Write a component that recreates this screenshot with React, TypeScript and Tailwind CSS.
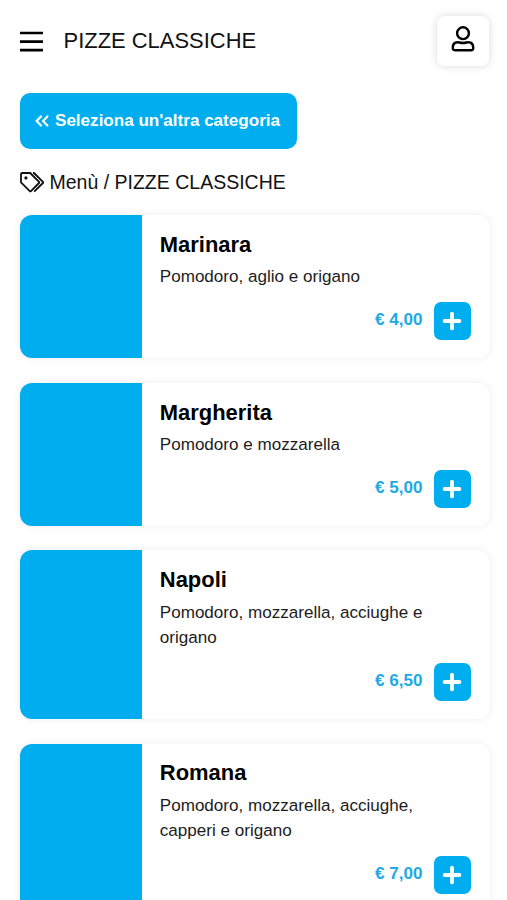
const dishes = [
  { name: 'Marinara', desc: 'Pomodoro, aglio e origano', price: '€ 4,00' },
  { name: 'Margherita', desc: 'Pomodoro e mozzarella', price: '€ 5,00' },
  { name: 'Napoli', desc: 'Pomodoro, mozzarella, acciughe e origano', price: '€ 6,50' },
  { name: 'Romana', desc: 'Pomodoro, mozzarella, acciughe, capperi e origano', price: '€ 7,00' }
]

function UserIcon() {
  return (
    <svg className="mr-px mb-[3px] w-6 h-7" viewBox="0 0 24 28" fill="none" stroke="currentColor" strokeWidth="2.4">
      <circle cx="12" cy="8.2" r="5.9" />
      <path d="M6.4 17.2C8.2 17 9 18 12 18C15 18 15.8 17 17.6 17.2C20.6 17.4 22.2 19.8 22.2 22.6V23.3Q22.2 25.2 20.3 25.2H3.7Q1.8 25.2 1.8 23.3V22.6C1.8 19.8 3.4 17.4 6.4 17.2Z" strokeLinejoin="round" />
    </svg>
  )
}

function TagsIcon() {
  return (
    <svg className="mb-[2px] w-[25px] h-[21px]" viewBox="0 0 25 21" fill="none" stroke="currentColor" strokeWidth="1.8" strokeLinejoin="round">
      <path d="M1 2.2Q1 1 2.2 1H10.2L19 9.8Q19.6 10.4 19 11L11 19.1Q10.4 19.7 9.8 19.1L1 10.4Z" />
      <path d="M13 1H14L22.9 9.8Q23.5 10.4 22.9 11L14.2 19.7" />
      <circle cx="5.9" cy="5.9" r="1.6" fill="currentColor" stroke="none" />
    </svg>
  )
}

export default function App() {
  return (
    <main className="h-[900px] overflow-hidden bg-white px-[19.5px] font-['Liberation_Sans',sans-serif] text-black">
      {/* Header */}
      <header className="-mr-[1.5px] flex h-[68px] items-center pt-[15px]">
        <svg className="w-6 h-[22px]" viewBox="0 0 24 22" stroke="currentColor" strokeWidth="2.7">
          <path d="M0 2H23M0 10.6H23M0 19.2H23" />
        </svg>
        <h1 className="ml-5 flex-1 text-[21.95px] text-[#111]">PIZZE CLASSICHE</h1>
        <button className="mb-[2px] flex h-[50px] w-[52px] items-center justify-center rounded-lg bg-white shadow-[0_0_8px_rgba(0,0,0,0.15)]">
          <UserIcon />
        </button>
      </header>

      <button className="mt-[25px] flex h-14 w-[277px] items-center rounded-[10px] bg-[#00adef] pl-[15.5px] text-[17.07px] font-bold text-white">
        <svg className="mr-[6px] mb-px w-[14px] h-3" viewBox="0 0 14 12" fill="none" stroke="currentColor" strokeWidth="2.1" strokeLinecap="round" strokeLinejoin="round">
          <path d="M6 1.4L1.6 6L6 10.6M12.4 1.4L8 6L12.4 10.6" />
        </svg>
        Seleziona un'altra categoria
      </button>

      <h2 className="mt-[21px] flex h-[26px] items-center gap-[5px] text-[19.5px] text-[#111]">
        <TagsIcon />
        Menù / PIZZE CLASSICHE
      </h2>

      {/* Dishes */}
      <div className="mt-[19.3px] flex flex-col gap-[24.4px]">
        {dishes.map((dish) => (
          <article key={dish.name} className="flex w-[470px] overflow-hidden rounded-xl bg-white shadow-[0_0_8px_rgba(0,0,0,0.07)]">
            <div className="w-[122px] shrink-0 bg-[#00adef]" />
            <div className="flex-1 pr-[19px] pl-[18.3px] pt-[12.8px] pb-[18.4px]">
              <h3 className="text-[21.95px] leading-[33px] font-bold">{dish.name}</h3>
              <p className="mt-[3.4px] text-[17.07px] leading-[25.6px] text-[#1c1c1c]">{dish.desc}</p>
              <div className="mt-3 flex items-center justify-end gap-[11px]">
                <span className="mb-[2.4px] text-[17.07px] font-bold text-[#1ca9e6]">{dish.price}</span>
                <button className="flex h-[38px] w-[37px] items-center justify-center rounded-[7px] bg-[#00adef] text-white">
                  <svg className="size-5" viewBox="0 0 20 20" stroke="currentColor" strokeWidth="3.8" strokeLinecap="round">
                    <path d="M10 2.6V17.4M2.6 10H17.4" />
                  </svg>
                </button>
              </div>
            </div>
          </article>
        ))}
      </div>
    </main>
  )
}
